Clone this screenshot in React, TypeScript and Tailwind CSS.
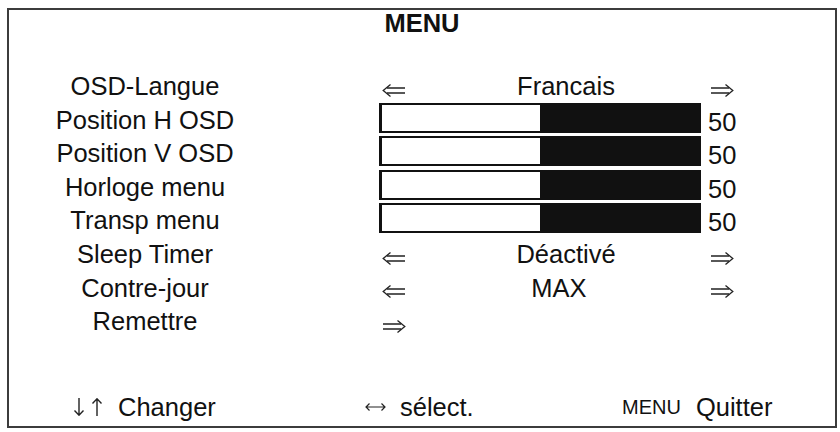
import React from "react";

const LeftArrow = () => (
  <svg width="24" height="13" viewBox="0 0 24 13" className="block">
    <path d="M23 4H5M23 9H5" stroke="#222" strokeWidth="1.3" fill="none" />
    <path d="M8.5 0.5L1.2 6.5L8.5 12.5" stroke="#222" strokeWidth="1.3" fill="none" />
  </svg>
);

const RightArrow = () => (
  <svg width="24" height="13" viewBox="0 0 24 13" className="block">
    <path d="M1 4H19M1 9H19" stroke="#222" strokeWidth="1.3" fill="none" />
    <path d="M15.5 0.5L22.8 6.5L15.5 12.5" stroke="#222" strokeWidth="1.3" fill="none" />
  </svg>
);

const UpDown = () => (
  <svg width="33" height="18" viewBox="0 0 33 18" className="block">
    <path d="M6 0V17M1.5 12.5L6 17.2L10.5 12.5" stroke="#222" strokeWidth="1.4" fill="none" />
    <path d="M24 18V1M19.5 5.5L24 0.8L28.5 5.5" stroke="#222" strokeWidth="1.4" fill="none" />
  </svg>
);

const LeftRight = () => (
  <svg width="21" height="10" viewBox="0 0 21 10" className="block">
    <path d="M1 5H20M4.5 1.5L1 5L4.5 8.5M16.5 1.5L20 5L16.5 8.5" stroke="#222" strokeWidth="1.2" fill="none" />
  </svg>
);

type Row =
  | { label: string; kind: "choice"; value: string; shift?: boolean }
  | { label: string; kind: "bar"; value: number }
  | { label: string; kind: "enter" };

const rows: Row[] = [
  { label: "OSD-Langue", kind: "choice", value: "Francais" },
  { label: "Position H OSD", kind: "bar", value: 50 },
  { label: "Position V OSD", kind: "bar", value: 50 },
  { label: "Horloge menu", kind: "bar", value: 50 },
  { label: "Transp menu", kind: "bar", value: 50 },
  { label: "Sleep Timer", kind: "choice", value: "Déactivé" },
  { label: "Contre-jour", kind: "choice", value: "MAX", shift: true },
  { label: "Remettre", kind: "enter" },
];

function Value({ row }: { row: Row }) {
  if (row.kind === "bar") {
    return (
      <div className="flex items-start">
        <div className="mt-[-1px] flex h-[30px] w-[322px] border-2 border-l-[3px] border-[#111] bg-[#111]">
          <div className="h-full bg-white" style={{ width: `${(row.value / 100) * 316}px` }} />
        </div>
        <div className="ml-[7px] pt-[2px]">{row.value}</div>
      </div>
    );
  }
  if (row.kind === "enter") {
    return (
      <div className="flex h-full items-end pb-[6px] pl-[3px]">
        <RightArrow />
      </div>
    );
  }
  return (
    <div className="flex h-full">
      <div className="flex w-[43px] items-end pb-[7px] pl-[3px]">
        <LeftArrow />
      </div>
      <div className={`w-[288px] text-center ${row.shift ? "pr-[14px]" : ""}`}>{row.value}</div>
      <div className="flex items-end pb-[7px]">
        <RightArrow />
      </div>
    </div>
  );
}

export default function App() {
  return (
    <div
      className="h-[432px] w-[840px] bg-white pl-[7px] pt-[8px] text-[#111]"
      style={{ fontFamily: '"Liberation Sans", Arial, sans-serif' }}
    >
      <div className="flex h-[420px] w-[830px] flex-col border-2 border-[#3c3c3c] text-[25.5px]">
        <div className="mt-px text-center font-bold leading-[25px]">MENU</div>
        <div className="mt-[34px] flex flex-col">
          {rows.map((row) => (
            <div key={row.label} className="flex h-[33.6px] leading-[33.6px]">
              <div className="w-[272px] text-center">{row.label}</div>
              <div className="ml-[98px]">
                <Value row={row} />
              </div>
            </div>
          ))}
        </div>
        <div className="mt-auto mb-[6px] flex leading-[25px]">
          <div className="flex w-[356px] items-end pl-[64px]">
            <div className="mb-[4px]">
              <UpDown />
            </div>
            <span className="ml-[12px]">Changer</span>
          </div>
          <div className="flex w-[257px] items-end">
            <div className="mb-[8px]">
              <LeftRight />
            </div>
            <span className="ml-[14px]">sélect.</span>
          </div>
          <div className="flex items-end">
            <span className="text-[20px] leading-[25px]">MENU</span>
            <span className="ml-[15px]">Quitter</span>
          </div>
        </div>
      </div>
    </div>
  );
}
